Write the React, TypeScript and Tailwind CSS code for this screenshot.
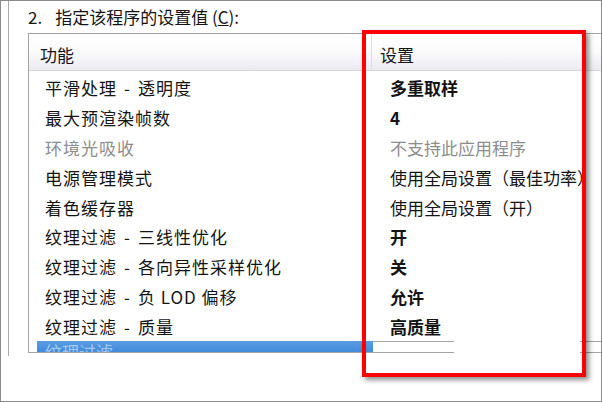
import React from 'react';

type Row = { name: string; value: string; kind: 'bold' | 'gray' | 'normal' };

const rows: Row[] = [
  { name: '平滑处理 - 透明度', value: '多重取样', kind: 'bold' },
  { name: '最大预渲染帧数', value: '4', kind: 'bold' },
  { name: '环境光吸收', value: '不支持此应用程序', kind: 'gray' },
  { name: '电源管理模式', value: '使用全局设置（最佳功率）', kind: 'normal' },
  { name: '着色缓存器', value: '使用全局设置（开）', kind: 'normal' },
  { name: '纹理过滤 - 三线性优化', value: '开', kind: 'bold' },
  { name: '纹理过滤 - 各向异性采样优化', value: '关', kind: 'bold' },
  { name: '纹理过滤 - 负 LOD 偏移', value: '允许', kind: 'bold' },
  { name: '纹理过滤 - 质量', value: '高质量', kind: 'bold' },
];

function Label({ text }: { text: string }) {
  const parts = text.split(' - ');
  return (
    <>
      {parts.map((p, i) => (
        <React.Fragment key={i}>
          {i > 0 && <span className="mx-[7px]">-</span>}
          {p}
        </React.Fragment>
      ))}
    </>
  );
}

export default function App() {
  return (
    <div
      className="relative w-[602px] h-[402px] overflow-hidden border border-[#8a8a8a] bg-white text-[17px] text-[#141414]"
      style={{ fontFamily: '"Noto Sans CJK SC", "Noto Sans", sans-serif' }}
    >
      <div className="ml-[7px] h-[355px] border-l border-[#a9a9a9] pl-[19px]">
        <div className="flex h-[32px] items-center pb-[2px] leading-none">
          <span>2.</span>
          <span className="ml-[13px]">
            指定该程序的设置值 (<span className="underline">C</span>):
          </span>
        </div>

        <div className="h-[320px] w-[600px] overflow-hidden border-t border-b border-l border-[#a4a4a4]">
          <div className="flex h-[37px] border-b border-[#d6d6d9] bg-linear-to-b from-white via-[#fbfbfc] to-[#ebeaf1] leading-none">
            <div className="flex w-[343px] items-center border-r border-[#dedee4] pl-[11px] pt-[4px]">功能</div>
            <div className="flex items-center pl-[8px] pt-[4px]">设置</div>
          </div>

          <div className="pt-[2px] leading-none">
            {rows.map((r) => (
              <div key={r.name} className="flex h-[29.8px] items-center">
                <div
                  className={`w-[344px] whitespace-nowrap pl-[16px] tracking-[1px] ${
                    r.kind === 'gray' ? 'text-[#8d8d8d]' : ''
                  }`}
                >
                  <Label text={r.name} />
                </div>
                <div
                  className={`whitespace-nowrap pl-[17px] ${
                    r.kind === 'bold' ? 'font-bold' : r.kind === 'gray' ? 'text-[#8d8d8d]' : ''
                  }`}
                >
                  {r.value}
                </div>
              </div>
            ))}
            <div className="flex h-[14px]">
              <div className="ml-[8px] h-full w-[336px] overflow-hidden bg-linear-to-b from-[#5a9de4] to-[#3b86d6] pl-[8px] pt-[2px] text-white/50">
                纹理过滤
              </div>
              <div className="flex-1 border-t border-[#a4a4a4]" />
            </div>
          </div>
        </div>
      </div>

      <div className="absolute left-[453px] top-[296px] h-[60px] w-[126px] bg-white" />

      <div className="absolute left-[361px] top-[29px] h-[347px] w-[224px] border-[4px] border-[#ff0000] shadow-[3px_3px_5px_rgba(0,0,0,0.45)]" />
    </div>
  );
}
